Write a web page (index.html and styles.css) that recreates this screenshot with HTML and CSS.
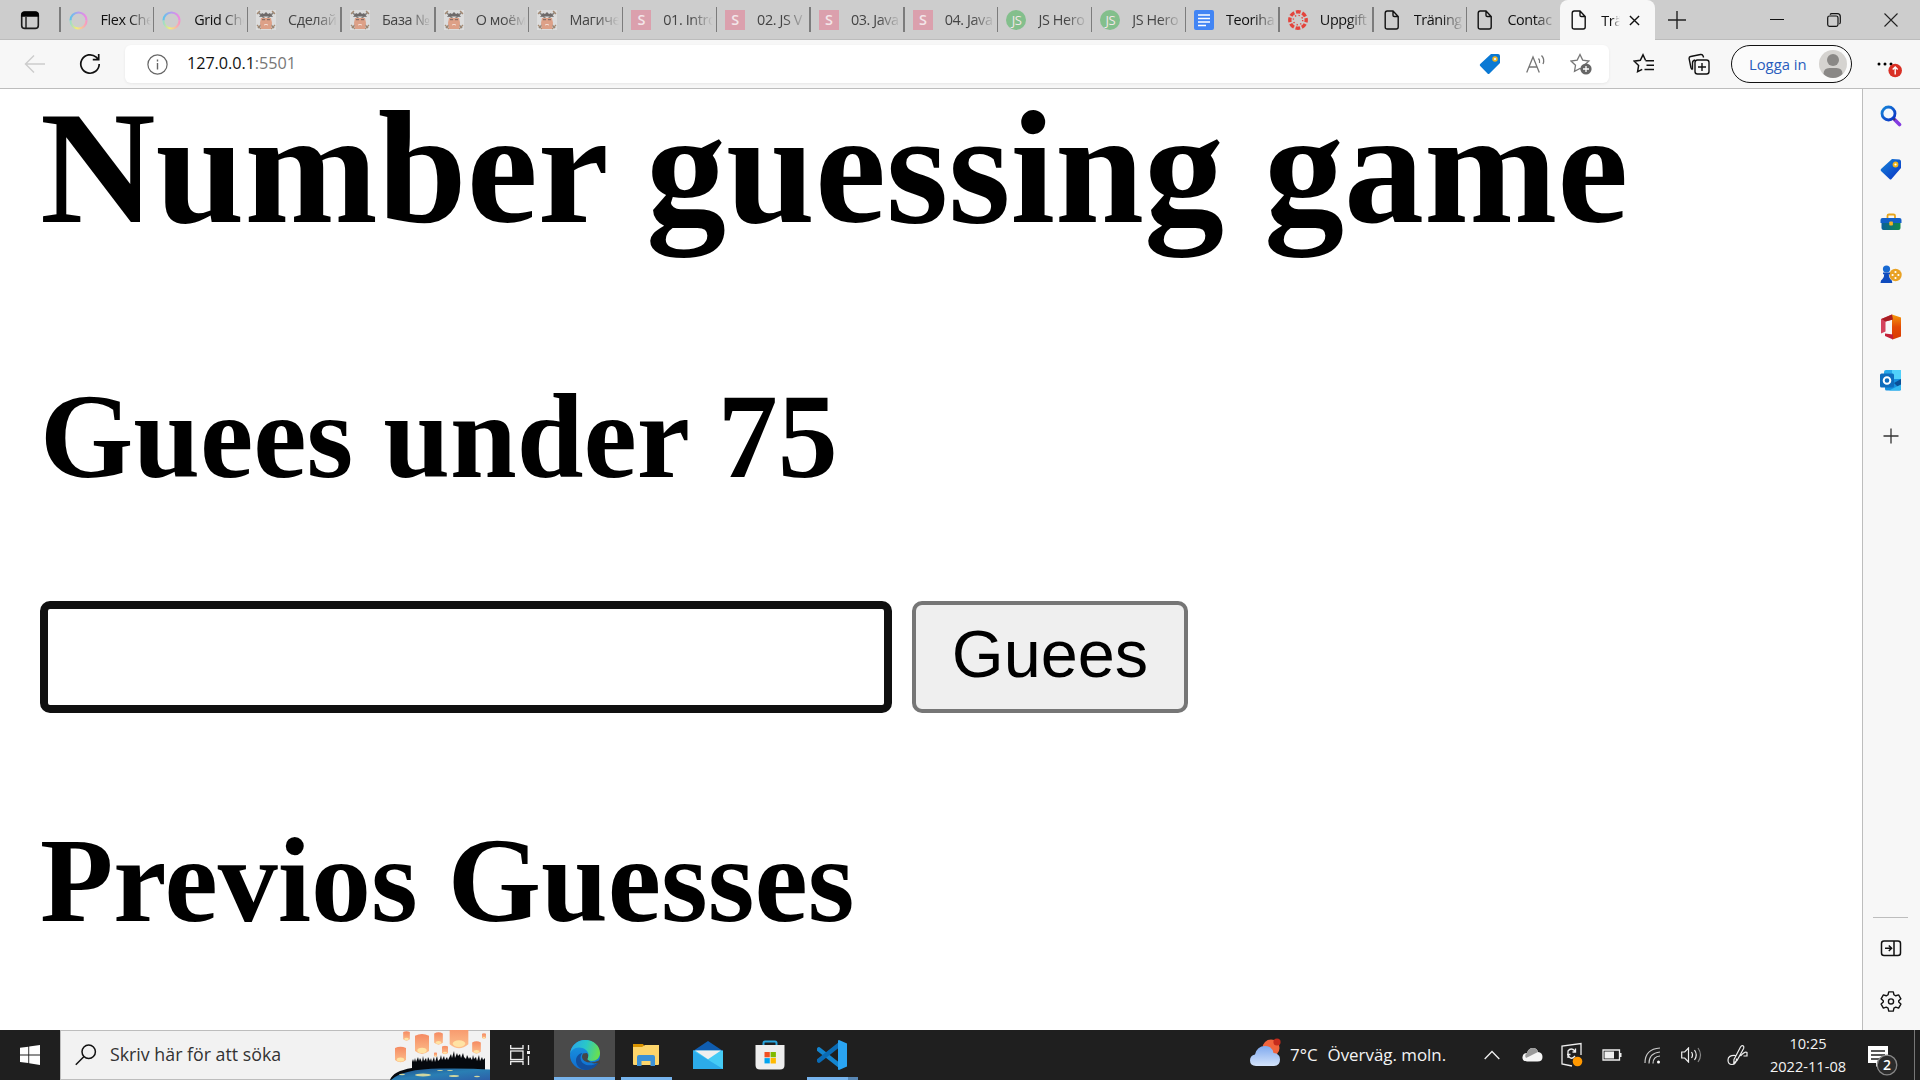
FILE: index.html
```html
<!DOCTYPE html>
<html lang="sv">
<head>
<meta charset="utf-8">
<title>Träning</title>
<link rel="stylesheet" href="styles.css">
</head>
<body>
<svg class="defs" width="0" height="0">
  <defs>
    <linearGradient id="ringG" x1="0" y1="0" x2="1" y2="0"><stop offset="0" stop-color="#62c4ea"/><stop offset=".5" stop-color="#b79cf0"/><stop offset="1" stop-color="#f08ae0"/></linearGradient>
    <linearGradient id="ringB" x1="0" y1="0" x2="1" y2="0"><stop offset="0" stop-color="#9fdcc8"/><stop offset=".4" stop-color="#f6ee74"/><stop offset="1" stop-color="#f59ac4"/></linearGradient>
    <linearGradient id="blueG" x1="0" y1="0" x2="1" y2="1"><stop offset="0" stop-color="#1687d9"/><stop offset="1" stop-color="#0a2fc4"/></linearGradient>
    <linearGradient id="boxG" x1="0" y1="0" x2="1" y2="0"><stop offset="0" stop-color="#0b5f9b"/><stop offset="1" stop-color="#118a4a"/></linearGradient>
    <linearGradient id="edgeG" x1="0" y1=".3" x2="1" y2=".5"><stop offset="0" stop-color="#2aa5e8"/><stop offset=".5" stop-color="#29c7c9"/><stop offset="1" stop-color="#6be04b"/></linearGradient>
    <linearGradient id="edgeB" x1="0" y1="0" x2="0" y2="1"><stop offset="0" stop-color="#1b9ae0"/><stop offset="1" stop-color="#0f6cd0"/></linearGradient>
    <linearGradient id="cloudG" x1="0" y1="0" x2="0" y2="1"><stop offset="0" stop-color="#7fa9ee"/><stop offset="1" stop-color="#d5e4fb"/></linearGradient>
    <linearGradient id="lampG" x1="0" y1="0" x2="0" y2="1"><stop offset="0" stop-color="#f58a62"/><stop offset="1" stop-color="#fdc08c"/></linearGradient>
    <linearGradient id="offG" x1="0" y1="0" x2="0" y2="1"><stop offset="0" stop-color="#f59a0c"/><stop offset=".5" stop-color="#e34a05"/><stop offset="1" stop-color="#d83b01"/></linearGradient>
    <linearGradient id="seaG" x1="0" y1="0" x2="1" y2="1"><stop offset="0" stop-color="#1b4c86"/><stop offset=".5" stop-color="#2a7fb4"/><stop offset="1" stop-color="#2d5fa8"/></linearGradient>
    <symbol id="ring" viewBox="0 0 20 20"><path d="M1.500 10.500a8 8 0 1 1 16 0" fill="none" stroke="url(#ringG)" stroke-width="2.200"/><path d="M1.500 10.500a8 8 0 0 0 16 0" fill="none" stroke="url(#ringB)" stroke-width="2.200"/></symbol>
    <symbol id="ninja" viewBox="0 0 20 20"><path fill="#dcdcdc" d="M0 0h20v20H0z"/><path d="M2 2l16 16M18 2L2 18" stroke="#85817d" stroke-width="1.6"/><path d="M1 15l4 4M19 15l-4 4M1 4l3-3M19 4l-3-3" stroke="#a58a72" stroke-width="1.2"/><path fill="#dda087" d="M5 8h10l1 5-1 6H5l-1-6z"/><path fill="#6e6a6a" d="M3 7l3-4 2 1 2-2 2 2 2-1 3 4-4-.6H7z"/><path d="M6 9.7h3M11 9.7h3" stroke="#75645f"/><path d="M8 15q2-1.3 4 0" stroke="#f4ded5" fill="none"/></symbol>
    <symbol id="docs" viewBox="0 0 20 20"><rect width="20" height="20" rx="2" fill="#4285f4"/><path d="M4 5h12M4 8.500h12M4 12h12M4 15.500h8" stroke="#fff" stroke-width="1.700"/></symbol>
    <symbol id="canvas" viewBox="0 0 20 20"><circle cx="10" cy="10" r="8.200" fill="none" stroke="#e4443c" stroke-width="3.400" stroke-dasharray="4.700 1.740" stroke-dashoffset="2.300"/><circle cx="10" cy="10" r="4.700" fill="none" stroke="#e4443c" stroke-width="1.400" stroke-dasharray="1.300 2.390"/></symbol>
    <symbol id="page" viewBox="0 0 20 20"><path d="M3.200 3.200Q3.200 1 5.200 1H11l5.200 5.500V17q0 2-2 2h-9q-2 0-2-2zM11 1v4.200q0 1.300 1.300 1.300h3.900" fill="none" stroke="#111" stroke-width="1.400"/></symbol>
    <symbol id="lamp" viewBox="0 0 12 18"><path d="M0 2Q6-1 12 2v13Q6 20 0 15z" fill="url(#lampG)"/><ellipse cx="6" cy="14.500" rx="4" ry="2.200" fill="#ffe3a4"/></symbol>
  </defs>
</svg>

<div class="screen">
  <header class="tabs">
    <div class="tab-menu"><svg width="20" height="20" viewBox="0 0 20 20"><rect x="1.700" y="2" width="16.600" height="16.400" rx="3" fill="none" stroke="#1b1b1b" stroke-width="1.600"/><path d="M1.200 5q0-3.500 3.500-3.500h10.600q3.500 0 3.500 3.500v1.800H1.200z" fill="#000"/><path d="M6 7v11" stroke="#222" stroke-width="1.500"/></svg></div>
    <div class="tab"><svg><use href="#ring"/></svg><span>Flex Che</span></div>
    <div class="tab"><svg><use href="#ring"/></svg><span>Grid Che</span></div>
    <div class="tab idle"><svg><use href="#ninja"/></svg><span>Сделай</span></div>
    <div class="tab idle"><svg><use href="#ninja"/></svg><span>База №</span></div>
    <div class="tab idle"><svg><use href="#ninja"/></svg><span>О моём</span></div>
    <div class="tab idle"><svg><use href="#ninja"/></svg><span>Магиче</span></div>
    <div class="tab idle"><i class="fav-s">S</i><span>01. Intro</span></div>
    <div class="tab idle"><i class="fav-s">S</i><span>02. JS V</span></div>
    <div class="tab idle"><i class="fav-s">S</i><span>03. Java</span></div>
    <div class="tab idle"><i class="fav-s">S</i><span>04. Java</span></div>
    <div class="tab idle"><i class="fav-js">JS</i><span>JS Hero</span></div>
    <div class="tab idle"><i class="fav-js">JS</i><span>JS Hero</span></div>
    <div class="tab"><svg><use href="#docs"/></svg><span>Teoriha</span></div>
    <div class="tab"><svg><use href="#canvas"/></svg><span>Uppgift</span></div>
    <div class="tab"><svg><use href="#page"/></svg><span>Träning</span></div>
    <div class="tab"><svg><use href="#page"/></svg><span>Contac</span></div>
    <div class="tab active"><svg><use href="#page"/></svg><span>Trä</span><svg class="close" viewBox="0 0 12 12"><path d="M1 1l10 10M11 1L1 11" stroke="#111" stroke-width="1.500"/></svg></div>
    <div class="new-tab"><svg width="18" height="18" viewBox="0 0 18 18"><path d="M9 0v18M0 9h18" stroke="#222" stroke-width="1.400"/></svg></div>
    <div class="window-buttons">
      <svg width="14" height="14"><path d="M0 6.500h14" stroke="#111"/></svg>
      <svg width="14" height="14" viewBox="0 0 14 14" fill="none" stroke="#111" stroke-width="1.200"><rect x=".7" y="3" width="10.300" height="10.300" rx="1.800"/><path d="M3 1.600q.6-.9 1.800-.9h5.500q3 0 3 3v5.500q0 1.200-.9 1.800"/></svg>
      <svg width="14" height="14"><path d="M.5.500l13 13M13.500.500l-13 13" stroke="#222" stroke-width="1.100"/></svg>
    </div>
  </header>

  <nav class="toolbar">
    <svg width="22" height="20" viewBox="0 0 22 20" fill="none" stroke="#cdcdcd" stroke-width="1.500"><path d="M21 10H1.500M10 1.500L1.500 10l8.500 8.500"/></svg>
    <svg width="22" height="22" viewBox="0 0 22 22" fill="none" stroke="#111" stroke-width="1.700"><path d="M20.200 11a9.200 9.200 0 1 1-3-6.800L19.500 6.500M19.700 1v5.700h-5.900"/></svg>
    <div class="address">
      <svg width="21" height="21" viewBox="0 0 21 21" fill="none" stroke="#666"><circle cx="10.500" cy="10.500" r="9.600" stroke-width="1.200"/><path d="M10.500 9v6.500M10.500 5.500v2" stroke-width="1.400"/></svg>
      <span class="url">127.0.0.1<em>:5501</em></span>
      <svg width="22" height="22" viewBox="0 0 22 22"><path d="M12 1h7q2 0 2 2v7L10.500 20.500q-1 1-2 0L1.200 13q-1-1 0-2z" fill="#0a79d4"/><circle cx="16" cy="6" r="2" fill="#eee" stroke="#f2b51a" stroke-width="1.500"/></svg>
      <svg class="aloud" width="20" height="20" viewBox="0 0 20 20" fill="none" stroke="#757575" stroke-width="1.300"><path d="M.7 18.500L7 3l6.300 15.500M3 13h8M12.500 4.500q1.800 2 1 4.500M15.500 1.500q3.500 3.500 1.500 8.500"/></svg>
      <svg class="star" width="22" height="22" viewBox="0 0 22 22"><path d="M10 1.500l2.700 5.600 6.200.9-4.500 4.300 1 6.100L10 15.500l-5.500 2.900 1-6.100L1 8l6.200-.9z" fill="none" stroke="#777" stroke-width="1.300"/><circle cx="16" cy="16" r="5.600" fill="#666"/><path d="M16 13v6M13 16h6" stroke="#fff" stroke-width="1.300"/></svg>
    </div>
    <svg width="22" height="22" viewBox="0 0 22 22" fill="none" stroke="#111" stroke-width="1.500"><path d="M12.500 7.300L10 1.800 7.300 7.300l-6.100.9 4.400 4.300-1 6.200 4.600-2.400M12.500 7.800H21M13.500 12.300H21M11.500 16.500H21"/></svg>
    <svg class="collections" width="22" height="22" viewBox="0 0 22 22" fill="none" stroke="#111" stroke-width="1.400"><rect x="7" y="7" width="14" height="14" rx="2.500"/><path d="M14 10v8M10 14h8M4.500 16.500q-1.200-.5-1.600-2L1.200 6q-.5-2 1.500-2.500l9.800-2q2-.4 2.600 1.500l.5 1.500M7 7q-2.500.5-2.500 3v6.500"/></svg>
    <div class="login"><span>Logga in</span><svg width="28" height="28" viewBox="0 0 28 28"><circle cx="14" cy="14" r="14" fill="#d5d3d0"/><circle cx="14" cy="10" r="6" fill="#8a8886"/><path d="M4.500 24q0-6 6-6h7q6 0 6 6-4 4-9.500 4t-9.500-4z" fill="#8a8886"/></svg></div>
    <svg width="28" height="28" viewBox="0 0 28 28"><circle cx="5" cy="14" r="1.500"/><circle cx="11" cy="14" r="1.500"/><circle cx="17" cy="14" r="1.500"/><circle cx="21.200" cy="20.500" r="6.800" fill="#d93025"/><path d="M21.200 24.500v-7M18.700 19.500l2.500-2.500 2.500 2.500" stroke="#fff" stroke-width="1.400" fill="none"/></svg>
  </nav>

  <div class="workspace">
    <main class="page">
      <h1>Number guessing game</h1>
      <h2>Guees under 75</h2>
      <form class="guess"><input type="text" aria-label="guess"><button type="button">Guees</button></form>
      <h2 class="previous">Previos Guesses</h2>
    </main>
    <aside class="sidebar">
      <svg viewBox="0 0 22 22"><path d="M13.500 13.500l6 6" stroke="#843be0" stroke-width="3.600" stroke-linecap="round"/><path d="M12.500 12.500l2.500 2.500" stroke="#444" stroke-width="2"/><circle cx="8.500" cy="8.500" r="6.500" fill="#f3f8fc" stroke="url(#blueG)" stroke-width="2.800"/></svg>
      <svg viewBox="0 0 22 22"><path d="M12 1l7.500.5q1.500.5 1.500 2V10L11.500 21q-1 1-2 0L1 13q-.8-1 0-2z" fill="url(#blueG)"/><circle cx="15.500" cy="6.500" r="2" fill="#fff" stroke="#f2b51a" stroke-width="1.800"/></svg>
      <svg viewBox="0 0 22 22"><path d="M7.500 7V4.800Q7.500 3.500 9 3.500h4.500q1.500 0 1.500 1.300V7" fill="none" stroke="#e7a51c" stroke-width="1.800"/><path d="M1.500 11h19v6q0 2-2 2h-15q-2 0-2-2z" fill="url(#boxG)"/><path d="M.5 9q0-2 2-2h17q2 0 2 2v3H.5z" fill="#1260c9"/><rect x="9.300" y="10.500" width="3.600" height="4" rx=".8" fill="#f3b426"/></svg>
      <svg viewBox="0 0 22 22"><circle cx="15.500" cy="11" r="6.200" fill="#e9a224"/><g fill="#fff"><circle cx="15.500" cy="8" r="1.100"/><circle cx="12.600" cy="11" r="1.100"/><circle cx="18.400" cy="11" r="1.100"/><circle cx="15.500" cy="14" r="1.100"/></g><circle cx="6.500" cy="5" r="3.600" fill="#1769d2"/><path d="M3 8.500h7v1.800H8.800q0 3 1.500 4.700 2 1 2 4H.5q0-3 2-4 1.800-1.700 1.700-4.700H3z" fill="#0f4bbd"/></svg>
      <svg class="office" viewBox="0 0 22 26"><path d="M12 .5L1 5v14.500l4.500-2V7.500l7.500-2z" fill="#d4435c"/><path d="M12 .5L21 3.500v19L12.500 25.500l-.5-5z" fill="url(#offG)"/><path d="M12 .5L1.500 5l4 2.500 7.500-2z" fill="#a91d22"/><path d="M5 19.500l8 1v5L5 22z" fill="#c22037"/></svg>
      <svg viewBox="0 0 22 22"><path d="M6 1h13q2 0 2 2v9H4V3q0-2 2-2z" fill="#28a8ea"/><path d="M12 1h9v9h-9z" fill="#50d0fa"/><path d="M5 10h16v10q0 1.500-1.500 1.500h-13Q5 21.500 5 20z" fill="#1490df"/><path d="M14 14l7-4v11z" fill="#0a4f96"/><path d="M9 21.500l12-6v4.500q0 1.500-1.500 1.500z" fill="#35b9f1"/><rect y="4.500" width="14" height="14" rx="1.500" fill="#0f6cbd"/><circle cx="7" cy="11.500" r="3.300" fill="none" stroke="#fff" stroke-width="2"/></svg>
      <svg class="plus" viewBox="0 0 22 22"><path d="M11 3.500v15M3.500 11h15" stroke="#333" stroke-width="1.300"/></svg>
      <hr>
      <svg viewBox="0 0 22 22" fill="none" stroke="#111" stroke-width="1.500"><rect x="1.500" y="4" width="19" height="14.500" rx="2.500"/><path d="M14 4v14.500M5 11.300h6.500M8.800 8.500l2.800 2.800L8.800 14"/></svg>
      <svg class="gear" viewBox="0 0 24 24" fill="none" stroke="#111" stroke-width="1.500" stroke-linejoin="round"><path d="M9.500 2h5l.7 3.200 2 1.100 3.100-1L22.800 9.600 20.400 11.800v1.400l2.400 2.200-2.500 4.300-3.100-1-2 1.100-.7 3.200h-5l-.7-3.200-2-1.100-3.100 1-2.500-4.300 2.400-2.200v-1.400L1.200 9.600l2.500-4.300 3.100 1 2-1.100z"/><circle cx="12" cy="12.500" r="2.800"/></svg>
    </aside>
  </div>

  <footer class="taskbar">
    <div class="start"><svg width="20" height="20" viewBox="0 0 20 20" fill="#fff"><path d="M0 2.800l8.300-1.100v7.700H0zM9.200 1.500L20 0v9.400H9.200zM0 10.400h8.300V18L0 17zM9.200 10.400H20V20L9.200 18.300z"/></svg></div>
    <div class="search">
      <svg width="22" height="22" viewBox="0 0 22 22" fill="none" stroke="#111" stroke-width="1.500"><circle cx="13.700" cy="7.700" r="6.700"/><path d="M9 12.500L.8 20.700"/></svg>
      <span>Skriv här för att söka</span>
      <svg class="lanterns" width="100" height="50" viewBox="0 0 100 50">
        <path d="M0 50Q3 41 22 38V32l1-3 1 3 1-4 1 4 2-5 1 4 1-3 2 4 1-6 1 5 2-3 1 4 1-5 2 4 1-3 1 4 2-5 1 5 2-6 1 5 2-2 1-4 1 5 2-4 1 4 2-3 1 3 2-4 1-2 1 4 2-7 1 7 2-5 1 3 2-2 1 4 2-5 1 4 2 2 1-4 2 4 1-2 2 3 1-5 1 4 2-2 1 4 2-6 1 6 2-4 1 3 2-2v20z" fill="#05080d"/>
        <path d="M1 50Q12 39 50 38.500q30-.5 50 1V50z" fill="url(#seaG)"/>
        <g fill="#cfd6a0"><ellipse cx="33" cy="45" rx="8" ry="1.500"/><ellipse cx="64" cy="46" rx="5" ry="1"/><ellipse cx="50" cy="40.500" rx="3" ry=".6"/><ellipse cx="12" cy="44.500" rx="3" ry=".8"/><ellipse cx="87" cy="46.500" rx="3" ry=".8"/><ellipse cx="60" cy="40.500" rx="3" ry=".6"/></g>
        <use href="#lamp" x="5" y="16" width="11" height="17"/><use href="#lamp" x="13" y="1" width="7" height="10"/><use href="#lamp" x="25" y="3.500" width="14" height="21"/><use href="#lamp" x="44" y="2" width="9" height="13"/><use href="#lamp" x="52" y="15.500" width="6" height="9"/><use href="#lamp" x="44" y="22" width="3" height="5"/><use href="#lamp" x="59" y="-9" width="20" height="28"/><use href="#lamp" x="82" y="11" width="9" height="13"/><use href="#lamp" x="92" y="3" width="4" height="6"/>
      </svg>
    </div>
    <div class="app tasks"><svg width="20" height="20" viewBox="0 0 20 20" fill="none" stroke="#eee" stroke-width="1.300"><rect x=".7" y="6" width="12.300" height="8.500"/><path d="M.7 0v3.500H13V0M.7 20v-3.500H13V20M18.500 0v5M18.500 11v9"/><path d="M17 7.500h3" stroke-width="3"/></svg></div>
    <div class="app edge current"><svg width="30" height="30" viewBox="0 0 30 30"><circle cx="15" cy="15" r="15" fill="url(#edgeB)"/><path d="M0 14C1 5 8 0 15 0c9 0 15 6 15 13 0 5-4 8-8 8-3 0-5-1-5-2 0-.7 1.500-1.500 1.500-4C18.500 11 14 7.500 9 7.500c-5 0-8 3-9 6.500z" fill="url(#edgeG)"/><path d="M12.500 13c-3 3-2.500 8 1 10.500 4 3 10 2 13.500-.5.700-.5 1.200 0 .7.700C25 28 20 30 15 30c-6-1-9-5-9-9.500 0-4 3-7 6.500-7.500z" fill="#124f9e"/><path d="M13 13.500q-2.500 4.500 1.500 7.500 6 3.500 15.500-1v4l-3-1q-5 1.500-9-3-1.500-1 0-2 1-3-1-5z" fill="#464646"/></svg></div>
    <div class="app explorer open"><svg width="28" height="24" viewBox="0 0 28 24"><path d="M1 1h10l2 3H1z" fill="#d99300"/><path d="M1 4h9l3-2h14v19q0 1-1 1H2q-1 0-1-1z" fill="#fdd56b"/><path d="M5 23v-9q0-2 2-2h14q2 0 2 2v9h-4.500v-5h-9v5z" fill="#3c91d6"/></svg></div>
    <div class="app"><svg width="30" height="28" viewBox="0 0 30 28"><path d="M0 10L15 0l15 10z" fill="#0f5db0"/><path d="M0 9.500h30V28H0z" fill="#45cbf5"/><path d="M0 9.500L30 28H0z" fill="#2cabe9"/><path d="M2 9.500h26L15 18.300z" fill="#efefef"/></svg></div>
    <div class="app"><svg width="30" height="30" viewBox="0 0 30 30"><path d="M8.500 6V3q0-1.500 1.500-1.500h10Q21.500 1.500 21.500 3v3" stroke="#29a6df" stroke-width="2" fill="none"/><path d="M.5 5h29v20q0 4.500-4.500 4.500H5Q.5 29.500.5 25z" fill="#eee"/><path d="M9.500 12h5.300v5.300H9.500z" fill="#f25022"/><path d="M15.600 12h5.300v5.300h-5.300z" fill="#7fba00"/><path d="M9.500 18.100h5.300v5.300H9.500z" fill="#00a4ef"/><path d="M15.600 18.100h5.300v5.300h-5.300z" fill="#ffb900"/></svg></div>
    <div class="app code"><svg width="30" height="30" viewBox="0 0 30 30"><path d="M2 9.500L23 26" stroke="#1485cf" stroke-width="4.500" stroke-linecap="round"/><path d="M2 20.500L23 4" stroke="#0a6bb5" stroke-width="4.500" stroke-linecap="round"/><path d="M22 0l8 3.500v23L22 30q-1 0-1-1V1q0-1 1-1z" fill="#2aa4f2"/></svg></div>
    <div class="tray">
      <svg class="weather" width="32" height="34" viewBox="0 0 32 34"><circle cx="21" cy="14" r="8.500" fill="#f0643c"/><circle cx="27" cy="8" r="3.600" fill="#c42b1c"/><path d="M6 32q-6-.5-6-5.500T5 20.500Q7 12 15 12q7 0 8.500 7 6.500.5 6.500 6.500 0 6.500-6 6.500z" fill="url(#cloudG)"/></svg>
      <span class="forecast"><b>7°C</b>Överväg. moln.</span>
      <svg width="16" height="10" viewBox="0 0 16 10"><path d="M.7 9L8 1.500 15.300 9" fill="none" stroke="#eee" stroke-width="1.300"/></svg>
      <svg width="21" height="14" viewBox="0 0 21 14"><path d="M5 13.500Q0 13 .5 9T5 5q1.500-5 6-5 4 0 5 4 4.500.5 4.500 5t-5 4.500z" fill="#f5f5f5"/><path d="M5 5q1.500-5 6-5 4 0 5 4L4 10Q2 7 5 5z" fill="#9a9a9a"/></svg>
      <svg width="22" height="26" viewBox="0 0 22 26"><path d="M11 24L1 22V4l19-2.500V13M7 12V9q3-4 7 0M14.500 6.500V10h-3M6 12.500h3.500M7 16v-3q3 6 7 1" fill="none" stroke="#eee" stroke-width="1.300"/><circle cx="16.500" cy="19.500" r="4.800" fill="#ff9800"/></svg>
      <svg width="20" height="12" viewBox="0 0 20 12"><path d="M1 1h16.500v10H1z" fill="none" stroke="#eee" stroke-width="1.300"/><path d="M2.500 2.500H12v7H2.500zM18 4h1.500v4H18z" fill="#eee"/></svg>
      <svg width="17" height="17" viewBox="0 0 17 17" fill="none" stroke="#ccc" stroke-width="1.200"><path d="M1 16Q1 2 16 1M5 16.500Q5 6 16 5M9 16.500Q9 9.500 16 9"/><circle cx="14.500" cy="15" r="1.500" fill="#fff" stroke="none"/></svg>
      <svg width="21" height="16" viewBox="0 0 21 16" fill="none" stroke="#eee" stroke-width="1.200"><path d="M.7 5h3L7.500 1v14l-3.800-4h-3zM10.500 5q2 3 0 6M13.500 3q3.500 5 0 10"/><path d="M17 1q5 7 0 14" stroke="#888"/></svg>
      <svg width="21" height="22" viewBox="0 0 21 22" fill="none" stroke="#eee" stroke-width="1.200"><path d="M7 15.500L13.500 3q1.200-2 2.600-1.200 1.300.9.500 2.700L10 16.500 6.800 19zM8.500 11.500Q1 11 1 16q0 4.500 4 4.500 4.500 0 4.500-6M13.500 12q4.500-5 6.500-3.500v3.500h-3.500"/></svg>
      <time class="clock"><span>10:25</span><span>2022-11-08</span></time>
      <svg class="notes" width="32" height="32" viewBox="0 0 32 32"><path d="M1 1h20v17h-8l-4 4v-4H1z" fill="#fff"/><path d="M4 6h14M4 10h14M4 14h8" stroke="#222" stroke-width="1.300"/><circle cx="20" cy="20" r="9.800" fill="#2b2b2b" stroke="#888" stroke-width="1.300"/><text x="20" y="25" text-anchor="middle">2</text></svg>
    </div>
  </footer>
</div>
</body>
</html>
```

FILE: styles.css
```css
* { box-sizing: border-box; }
body { margin: 0; font-family: "Open Sans", "Noto Sans", sans-serif; overflow: hidden; }
svg { display: block; flex: none; }
.defs { position: absolute; }
.screen { width: 1920px; height: 1080px; display: grid; grid-template-rows: 40px 49px 941px 50px; }

.tabs { display: flex; background: #cdcdcd; border-bottom: 1px solid #bcbcbc; }
.tab-menu { width: 59px; padding: 10px 0 0 20px; }
.tab { flex: none; width: 93.8px; height: 39px; display: flex; align-items: center; font-size: 14.4px; letter-spacing: -.4px; color: #111; }
.tab::before { content: ""; width: 1.5px; height: 25px; background: #7c7c7c; margin-right: 8px; }
.tab > svg { width: 20px; height: 20px; }
.tab span { margin-left: 12px; width: 50px; overflow: hidden; white-space: nowrap; mask-image: linear-gradient(90deg, #000 55%, transparent); }
.idle { color: #444; }
.fav-s, .fav-js { flex: none; width: 20px; height: 20px; font-style: normal; text-align: center; line-height: 20px; color: #f3e6e9; }
.fav-s { background: #dba0ad; font-weight: 600; }
.fav-js { background: #83bf8c; border-radius: 50%; font-size: 13px; letter-spacing: -.5px; }
.active { width: 95px; height: 40px; background: #f7f7f7; border-radius: 8px 8px 0 0; }
.active::before { visibility: hidden; }
.active span { width: 19px; margin-left: 12px; }
.tab > .close { width: 11px; height: 11px; margin-left: 9px; }
.new-tab { padding: 11px 0 0 13px; }
.window-buttons { margin-left: auto; padding: 13px 22px 0 0; display: flex; gap: 43px; }

.toolbar { display: grid; grid-template-columns: 70px 40px 1499px 70px 52px 121px 68px; align-items: center; justify-items: center; background: #f7f7f7; border-bottom: 1px solid #bdbdbd; }
.address { justify-self: end; width: 1484px; height: 38px; display: flex; align-items: center; padding: 0 17px 0 22px; background: #fff; border-radius: 6px; box-shadow: 0 1px 3px #0001; }
.collections { justify-self: start; margin-left: 9px; }
.url { margin: 0 auto 2px 19px; font-size: 16.2px; color: #111; letter-spacing: -.05px; }
.url em { font-style: normal; color: #777; }
.aloud { margin-left: 25px; }
.star { margin-left: 24px; }
.login { width: 121px; height: 38px; border: 1.5px solid #111; border-radius: 19px; display: flex; align-items: center; justify-content: space-between; padding: 0 4px 0 17px; font-size: 14.8px; color: #2a5dbd; background: #fbfbfb; }
.toolbar > :last-child { margin-left: 4px; }

.workspace { display: grid; grid-template-columns: 1862px 58px; background: #f7f7f7; }
.page { background: #fff; overflow: hidden; padding: 0 40px; font-family: "Liberation Serif", serif; color: #000; }
h1, h2 { margin: 0; font-weight: 700; white-space: nowrap; }
h1 { font-size: 160px; line-height: 184px; margin-top: -13px; }
h2 { font-size: 120px; line-height: 138px; margin-top: 108px; }
.guess { display: flex; gap: 20px; margin-top: 95px; }
.guess input { width: 852px; height: 112px; border: 8px solid #101010; border-radius: 10px; outline: 0; background: #fff; }
.guess button { width: 276px; height: 112px; padding: 0 0 7px; border: 4px solid #767676; border-radius: 10px; background: #efefef; font: 66.667px "Liberation Sans", sans-serif; color: #000; }
.previous { margin-top: 99px; }
.sidebar { border-left: 1px solid #bdbdbd; display: flex; flex-direction: column; align-items: center; padding: 16px 2px 0 0; gap: 31px; }
.sidebar svg { width: 22px; height: 22px; }
.sidebar .office { height: 26px; margin: -3px 0 -2px; }
.sidebar .plus { margin-top: 3px; }
.sidebar hr { width: 35px; height: 1px; border: 0; background: #bdbdbd; margin: auto 0 -12px; }
.sidebar .gear { margin-bottom: 18px; }

.taskbar { display: flex; background: #1f1f1f; color: #f3f3f3; }
.start { width: 60px; padding: 15px 0 0 20px; }
.search { width: 430px; display: flex; align-items: center; background: #f2f2f2; border: 1px solid #bdbdbd; border-right: 0; padding-left: 14px; color: #333; font-size: 17.8px; }
.search span { margin: 0 0 2px 13px; white-space: nowrap; }
.lanterns { margin-left: auto; }
.app { width: 62px; display: flex; align-items: center; justify-content: center; }
.tasks { width: 64px; padding-right: 4px; }
.edge { width: 61px; }
.current { background: #4a4a4a; }
.current, .open { box-shadow: inset 0 -3px #76b3ec; }
.explorer { width: 51px; margin: 0 5px 0 6px; padding-right: 2px; }
.code { width: 51px; margin-left: 6px; padding-right: 1px; background: linear-gradient(90deg, #76b3ec 41px, #5886b3 41px) bottom / 100% 3px no-repeat; }
.tray { margin: 0 5px 0 auto; width: 666px; display: grid; grid-template-columns: 41px 182px 40px 40px 40px 40px 40px 38px 54px 88px 62px; align-items: center; justify-items: center; border-right: 1px solid #777; }
.weather { margin: 0 0 9px 1px; justify-self: start; }
.forecast { justify-self: start; font-size: 16.9px; white-space: nowrap; margin-bottom: 1px; }
.forecast b { font-weight: 400; margin-right: 10px; }
.clock { display: flex; flex-direction: column; align-items: center; font-size: 14.6px; line-height: 23px; white-space: nowrap; }
.notes { justify-self: start; margin: 12px 0 0 15px; }
.notes text { font: 600 14px "Open Sans", sans-serif; fill: #fff; }
```
